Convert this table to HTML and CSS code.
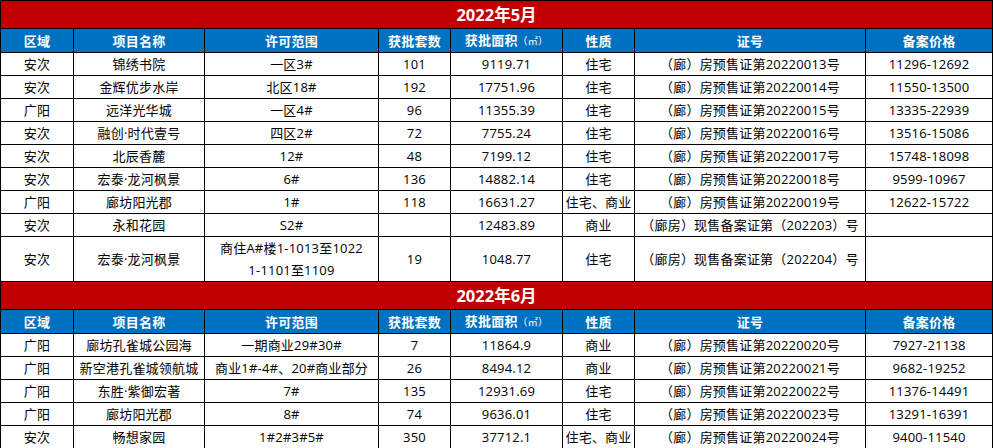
FILE: index.html
```html
<!DOCTYPE html>
<html lang="zh">
<head>
<meta charset="utf-8">
<title>2022年5月-6月 预售许可</title>
<link rel="stylesheet" href="styles.css">
</head>
<body>
<div class="sheet">
<table class="grid">
  <colgroup>
    <col class="c1"><col class="c2"><col class="c3"><col class="c4"><col class="c5"><col class="c6"><col class="c7"><col class="c8">
  </colgroup>
  <tr class="title"><td colspan="8">2022年5月</td></tr>
  <tr class="head"><td>区域</td><td>项目名称</td><td>许可范围</td><td>获批套数</td><td>获批面积<span class="unit">（㎡）</span></td><td>性质</td><td>证号</td><td>备案价格</td></tr>
  <tr><td>安次</td><td>锦绣书院</td><td>一区3#</td><td>101</td><td>9119.71</td><td>住宅</td><td>（廊）房预售证第20220013号</td><td>11296-12692</td></tr>
  <tr><td>安次</td><td>金辉优步水岸</td><td>北区18#</td><td>192</td><td>17751.96</td><td>住宅</td><td>（廊）房预售证第20220014号</td><td>11550-13500</td></tr>
  <tr><td>广阳</td><td>远洋光华城</td><td>一区4#</td><td>96</td><td>11355.39</td><td>住宅</td><td>（廊）房预售证第20220015号</td><td>13335-22939</td></tr>
  <tr><td>安次</td><td>融创·时代壹号</td><td>四区2#</td><td>72</td><td>7755.24</td><td>住宅</td><td>（廊）房预售证第20220016号</td><td>13516-15086</td></tr>
  <tr><td>安次</td><td>北辰香麓</td><td>12#</td><td>48</td><td>7199.12</td><td>住宅</td><td>（廊）房预售证第20220017号</td><td>15748-18098</td></tr>
  <tr><td>安次</td><td>宏泰·龙河枫景</td><td>6#</td><td>136</td><td>14882.14</td><td>住宅</td><td>（廊）房预售证第20220018号</td><td>9599-10967</td></tr>
  <tr><td>广阳</td><td>廊坊阳光郡</td><td>1#</td><td>118</td><td>16631.27</td><td>住宅、商业</td><td>（廊）房预售证第20220019号</td><td>12622-15722</td></tr>
  <tr><td>安次</td><td>永和花园</td><td>S2#</td><td></td><td>12483.89</td><td>商业</td><td>（廊房）现售备案证第（202203）号</td><td></td></tr>
  <tr class="tall"><td>安次</td><td>宏泰·龙河枫景</td><td>商住A#楼1-1013至1022<br>1-1101至1109</td><td>19</td><td>1048.77</td><td>住宅</td><td>（廊房）现售备案证第（202204）号</td><td></td></tr>
  <tr class="title"><td colspan="8">2022年6月</td></tr>
  <tr class="head"><td>区域</td><td>项目名称</td><td>许可范围</td><td>获批套数</td><td>获批面积<span class="unit">（㎡）</span></td><td>性质</td><td>证号</td><td>备案价格</td></tr>
  <tr><td>广阳</td><td>廊坊孔雀城公园海</td><td>一期商业29#30#</td><td>7</td><td>11864.9</td><td>商业</td><td>（廊）房预售证第20220020号</td><td>7927-21138</td></tr>
  <tr><td>广阳</td><td>新空港孔雀城领航城</td><td>商业1#-4#、20#商业部分</td><td>26</td><td>8494.12</td><td>商业</td><td>（廊）房预售证第20220021号</td><td>9682-19252</td></tr>
  <tr><td>广阳</td><td>东胜·紫御宏著</td><td>7#</td><td>135</td><td>12931.69</td><td>住宅</td><td>（廊）房预售证第20220022号</td><td>11376-14491</td></tr>
  <tr><td>广阳</td><td>廊坊阳光郡</td><td>8#</td><td>74</td><td>9636.01</td><td>住宅</td><td>（廊）房预售证第20220023号</td><td>13291-16391</td></tr>
  <tr><td>安次</td><td>畅想家园</td><td>1#2#3#5#</td><td>350</td><td>37712.1</td><td>住宅、商业</td><td>（廊）房预售证第20220024号</td><td>9400-11540</td></tr>
</table>
</div>
</body>
</html>
```
FILE: styles.css
```css
html, body {
  margin: 0;
  padding: 0;
  background: #ffffff;
}
.sheet {
  width: 993px;
}
.grid {
  width: 992px;
  table-layout: fixed;
  border-collapse: collapse;
  font-family: "Open Sans", "Noto Sans CJK SC", sans-serif;
  font-size: 13px;
  letter-spacing: 0.2px;
  color: #000000;
}
.c1 { width: 73px; }
.c2 { width: 131px; }
.c3 { width: 174px; }
.c4 { width: 72px; }
.c5 { width: 112px; }
.c6 { width: 72px; }
.c7 { width: 231px; }
.c8 { width: 127px; }
.grid td {
  border: 1px solid #000000;
  padding: 0;
  height: 22px;
  line-height: 20px;
  text-align: center;
  vertical-align: middle;
  white-space: nowrap;
  overflow: hidden;
}
.grid tr.title td {
  background: #c00000;
  color: #ffffff;
  font-weight: bold;
  font-size: 16.5px;
  letter-spacing: 0;
  height: 27px;
}
.grid tr.head td {
  background: #0070c0;
  color: #ffffff;
  font-weight: bold;
  height: 23px;
}
.grid tr.tall td {
  height: 43px;
  line-height: 22px;
}
.unit {
  font-size: 10px;
  font-weight: normal;
}
```
